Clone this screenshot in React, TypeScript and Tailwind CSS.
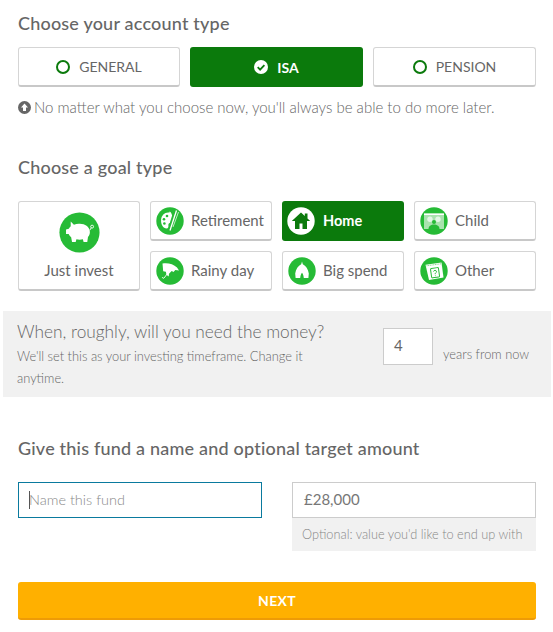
import type { ReactNode } from 'react'

const GREEN = '#26bb36'

function Badge({ active, children, big }: { active?: boolean; children: ReactNode; big?: boolean }) {
  return (
    <svg viewBox="0 0 28 28" className={big ? 'w-[41px] h-[41px] shrink-0' : 'w-[28px] h-[28px] shrink-0'}>
      <circle cx="14" cy="14" r="13.7" fill={active ? '#ffffff' : GREEN} />
      {children}
    </svg>
  )
}

const PigIcon = () => (
  <Badge big>
    <path d="M8 6.500l2.200 2.200c1.300-.5 2.600-.7 4-.6 3.800.1 6.300 2 6.800 4.800.3 1.600-.2 3-1.200 4.100l-.5 3.500h-2.500l-.5-1.900c-1.500.4-3 .4-4.400 0l-.5 1.900H8.900l-.6-3.300c-.8-.6-1.400-1.300-1.700-2.100L4.800 15v-3l1.900-.6c.3-.7.7-1.200 1.300-1.700z" fill="#fff" />
    <circle cx="22.600" cy="10" r="1" fill="none" stroke="#fff" strokeWidth=".6" />
    <path d="M21 12.500l1-1.700" stroke="#fff" strokeWidth=".6" />
  </Badge>
)

const PaletteIcon = () => (
  <Badge>
    <path d="M13.500 5.500c-4.500-.8-8 2.600-8.400 7-.4 4.800 2 9 5.500 9 1.700 0 1.900-1.600 1.800-3-.1-1.300.4-2 1.400-2.400l2.300-7.600c-.4-1.700-1.200-3.600-2.600-4z" fill="#fff" />
    <circle cx="11" cy="9" r="1.300" fill={GREEN} />
    <circle cx="8" cy="12.200" r="1.300" fill={GREEN} />
    <circle cx="8.400" cy="16.500" r="1.300" fill={GREEN} />
    <path d="M20.500 3.500l-6.500 20" stroke="#fff" strokeWidth="1.300" />
    <path d="M22.500 5l-5.500 15" stroke="#fff" strokeWidth=".7" />
  </Badge>
)

const UmbrellaIcon = () => (
  <Badge>
    <path d="M6.500 6.500c5-1 11 .5 14.500 4l2 3-3.700-.6-1.800 2-1.800-.9-2.700 2.700-.3 2.900-2.300-1.800-.5-3-2.700-.5z" fill="#fff" />
    <path d="M14 13.500l-6 7.500c-.8.800-1.900-.2-1.400-1" stroke="#fff" strokeWidth=".9" fill="none" />
  </Badge>
)

const HomeIcon = () => (
  <Badge active>
    <path d="M14 5.500L4.800 14H8v8h4.500v-5.500h3V22H20v-8h3.200L20.500 11.500V6.500h-2.700v2.500z" fill="#0b7a0c" />
  </Badge>
)

const TentIcon = () => (
  <Badge>
    <path d="M14 4.500l.8 2.700c3 1.500 5.400 5 6 9.300l-.4 4.500h-4.600c-.2-2.200-.7-3.900-1.800-5.200-1.100 1.300-1.600 3-1.800 5.200H7.600l-.4-4.500c.6-4.300 3-7.800 6-9.300z" fill="#fff" />
  </Badge>
)

const ChildIcon = () => (
  <Badge>
    <rect x="4" y="6.500" width="20" height="15.500" fill="#a9e3ae" />
    <path d="M4 6.500h20V8H4z" fill="#fff" />
    <circle cx="10" cy="12.200" r="2.700" fill="#fff" opacity=".7" />
    <circle cx="18" cy="12.200" r="2.700" fill="#fff" opacity=".7" />
    <circle cx="14" cy="15" r="2" fill={GREEN} />
    <path d="M8.500 22c0-3 2.500-4.500 5.500-4.500s5.500 1.500 5.500 4.500z" fill={GREEN} />
  </Badge>
)

const OtherIcon = () => (
  <Badge>
    <path d="M5.500 7.800L21.500 5.500l2 15L9 23z" fill="#fff" />
    <path d="M6.500 8.800l14.500-2" stroke={GREEN} strokeWidth=".6" strokeDasharray="1 .7" />
    <rect x="11" y="11" width="8" height="9.500" rx="1" transform="rotate(-8 15 15.500)" fill="none" stroke={GREEN} strokeWidth="1" />
    <path d="M13.500 14.500c.3-1.500 3-1.500 3 .2 0 1.200-1.500 1.100-1.300 2.500M15.400 18.500v.6" stroke={GREEN} strokeWidth="1" fill="none" />
  </Badge>
)

function AccountButton({ label, active }: { label: string; active?: boolean }) {
  return (
    <div
      className={
        active
          ? 'h-[40px] flex items-center justify-center gap-[9px] rounded-[3px] bg-[#0b7a0c] text-white font-bold text-[14px]'
          : 'h-[40px] flex items-center justify-center gap-[9px] rounded-[3px] bg-white border border-[#d5d5d5] border-b-2 border-b-[#c8c8c8] text-[#666666] text-[14px]'
      }
    >
      {active ? (
        <svg viewBox="0 0 14 14" className="w-[14px] h-[14px]">
          <circle cx="7" cy="7" r="7" fill="#fff" />
          <path d="M3.700 7.200l2.400 2.400 4.300-4.400" stroke="#0b7a0c" strokeWidth="1.800" fill="none" />
        </svg>
      ) : (
        <span className="w-[14px] h-[14px] rounded-full border-2 border-[#0b7a0c]" />
      )}
      <span>{label}</span>
    </div>
  )
}

function GoalButton({ label, icon, active }: { label: string; icon: ReactNode; active?: boolean }) {
  return (
    <div
      className={
        active
          ? 'h-[40px] flex items-center gap-[8px] pl-[5px] rounded-[3px] bg-[#0b7a0c] text-white font-bold text-[14.5px]'
          : 'h-[40px] flex items-center gap-[7px] pl-[5px] rounded-[3px] bg-white border border-[#d5d5d5] border-b-2 border-b-[#c8c8c8] text-[#666666] text-[15px]'
      }
    >
      {icon}
      <span>{label}</span>
    </div>
  )
}

export default function App() {
  return (
    <div className="w-[553px] h-[632px] bg-white overflow-hidden font-['Lato',sans-serif] text-[#666666]">
      <div className="pl-[18px] w-[536px] pt-[12px]">
        <h2 className="text-[18px] leading-[22px] font-medium tracking-[0.2px]">Choose your account type</h2>

        <div className="mt-[13px] grid grid-cols-[162px_173px_163px] gap-[10px]">
          <AccountButton label="GENERAL" />
          <AccountButton label="ISA" active />
          <AccountButton label="PENSION" />
        </div>

        <p className="mt-[10px] flex items-center gap-[3px] text-[15px] leading-[20px] font-light text-[#666666]">
          <svg viewBox="0 0 13 13" className="w-[13px] h-[13px] shrink-0">
            <circle cx="6.500" cy="6.500" r="6.500" fill="#666666" />
            <path d="M6.500 2.500l3.500 4H8v3.500H5V6.500H3z" fill="#fff" />
          </svg>
          No matter what you choose now, you'll always be able to do more later.
        </p>

        <h2 className="mt-[39px] text-[18px] leading-[22px] font-medium tracking-[0.2px]">Choose a goal type</h2>

        <div className="mt-[23px] grid grid-cols-4 grid-rows-[40px_40px] gap-x-[10px] gap-y-[10px]">
          <div className="row-span-2 flex flex-col items-center rounded-[3px] bg-white border border-[#d5d5d5] border-b-2 border-b-[#c8c8c8] pt-[10px] text-[15px]">
            <PigIcon />
            <span className="mt-[6px]">Just invest</span>
          </div>
          <GoalButton label="Retirement" icon={<PaletteIcon />} />
          <GoalButton label="Home" icon={<HomeIcon />} active />
          <GoalButton label="Child" icon={<ChildIcon />} />
          <GoalButton label="Rainy day" icon={<UmbrellaIcon />} />
          <GoalButton label="Big spend" icon={<TentIcon />} />
          <GoalButton label="Other" icon={<OtherIcon />} />
        </div>
      </div>

      <div className="mt-[20px] mx-[3px] w-[548px] h-[86px] bg-[#f1f1f1] pl-[14px] flex text-[#666666] font-light">
        <div className="w-[300px] pt-[10px]">
          <div className="text-[17.300px] leading-[22px] whitespace-nowrap">When, roughly, will you need the money?</div>
          <p className="mt-[2px] text-[12.850px] leading-[22px]">We'll set this as your investing timeframe. Change it anytime.</p>
        </div>
        <div className="ml-[66px] mt-[17px] w-[50px] h-[37px] bg-white border border-[#cccccc] pl-[10px] text-[15px] leading-[33px] font-normal">4</div>
        <div className="ml-[10px] mt-[34px] text-[12.850px] leading-[18px] whitespace-nowrap">years from now</div>
      </div>

      <div className="pl-[18px] w-[536px]">
        <h2 className="mt-[40px] text-[18px] leading-[22px] font-medium tracking-[0.2px]">Give this fund a name and optional target amount</h2>

        <div className="mt-[23px] grid grid-cols-2 gap-[30px] items-start">
          <div className="relative h-[36px] border border-[#0a7a9e] bg-white pl-[10px] text-[14.500px] leading-[33px] font-light text-[#8a8a8a]">
            <span className="absolute left-[10px] top-[8px] w-px h-[18px] bg-[#555555]" />
            Name this fund
          </div>
          <div>
            <div className="h-[36px] border border-[#cccccc] bg-white pl-[11px] text-[15px] leading-[33px] text-[#777777]">£28,000</div>
            <div className="h-[33px] bg-[#f1f1f1] pl-[10px] text-[12.750px] leading-[33px] font-light text-[#888888] whitespace-nowrap">Optional: value you'd like to end up with</div>
          </div>
        </div>

        <div className="mt-[31px] h-[38px] rounded-[3px] bg-[#ffb000] border-b-2 border-b-[#ee9b06] flex items-center justify-center text-white font-bold text-[14px] tracking-[0.3px]">
          NEXT
        </div>
      </div>
    </div>
  )
}
